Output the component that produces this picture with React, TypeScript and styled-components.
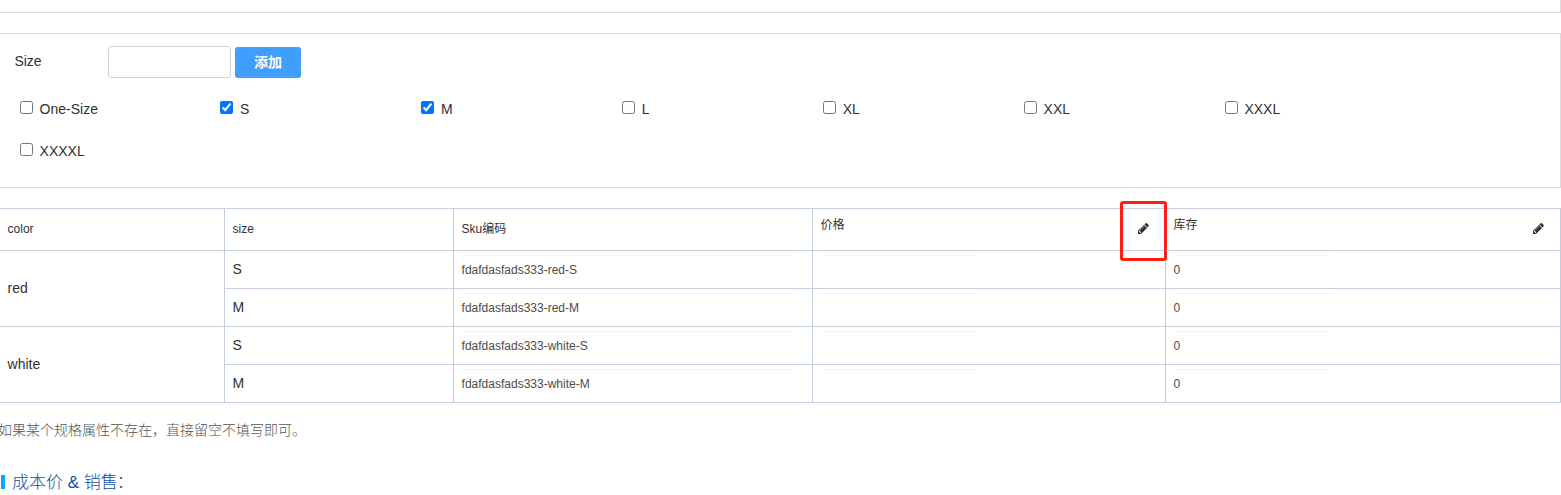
import React from "react";
import styled, { createGlobalStyle } from "styled-components";

const GlobalStyle = createGlobalStyle`
  * { box-sizing: border-box; }
  body {
    margin: 0;
    background: #fff;
    color: #303133;
    font: 14px/20px "Liberation Sans", "Noto Sans CJK SC", sans-serif;
    overflow: hidden;
  }
`;

const Page = styled.main`
  width: 1561px;
  height: 495px;
  overflow: hidden;
`;

const PreviousPanel = styled.div`
  height: 13px;
  border: solid #dcdcdc;
  border-width: 0 1px 1px 0;
`;

const SizePanel = styled.section`
  height: 155px;
  margin-top: 20px;
  padding-top: 12px;
  border: solid #dcdcdc;
  border-width: 1px 1px 1px 0;
`;

const AddRow = styled.div`
  display: flex;
  align-items: flex-start;
  height: 32px;
  padding-left: 14.4px;
`;

const AddLabel = styled.label`
  width: 93.6px;
  padding-top: 5px;
`;

const SizeInput = styled.input`
  width: 123px;
  height: 32px;
  margin: 0 4px 0 0;
  padding: 0 8px;
  border: 1px solid #ced4da;
  border-radius: 3px;
  outline: none;
`;

const AddButton = styled.button`
  width: 66px;
  height: 31px;
  margin-top: 1px;
  padding: 0;
  border: 0;
  border-radius: 3px;
  background: #409eff;
  color: #fff;
  font: bold 14px/31px "Liberation Sans", "Noto Sans CJK SC", sans-serif;
`;

const Options = styled.div`
  display: grid;
  grid-template-columns: 200.4px repeat(6, 200.9px);
  grid-auto-rows: 42px;
  padding: 10px 0 0 20px;
`;

const Option = styled.label`
  display: flex;
  align-items: flex-start;
  padding-top: 11px;

  input {
    width: 13px;
    height: 13px;
    margin: 2px 6.6px 0 0;
  }
`;

const SkuTable = styled.div`
  display: grid;
  grid-template-columns: 225px 229px 359px 353px 395px;
  grid-template-rows: 42px repeat(4, 38px);
  margin-top: 20px;
  border-top: 1px solid #c4cedc;
`;

const Cell = styled.div<{ $span?: number }>`
  display: flex;
  align-items: center;
  grid-row: span ${(p) => p.$span ?? 1};
  padding: 0 8px 2px 7.6px;
  border: solid #c4cedc;
  border-width: 0 1px 1px 0;
`;

const HeadCell = styled(Cell)`
  font-size: 12px;
`;

const EditableHead = styled(HeadCell)`
  position: relative;
  justify-content: space-between;
  padding-right: 16px;
`;

const HeadText = styled.span`
  padding-bottom: 8px;
`;

const FieldCell = styled(Cell)`
  flex-direction: column;
  align-items: flex-start;
  justify-content: flex-start;
  padding-top: 4px;
  font-size: 12px;
  color: #4c4c4c;
`;

const FieldEdge = styled.span<{ $width: number }>`
  width: ${(p) => p.$width}px;
  height: 1px;
  margin: 0 0 4px 2.4px;
  background: #f3f4f6;
`;

const Highlight = styled.span`
  position: absolute;
  top: -8px;
  right: -2px;
  width: 47px;
  height: 60px;
  border: 3px solid #ff1f12;
  border-radius: 3px;
`;

const Hint = styled.p`
  margin: 17px 0 0 -2px;
  color: #555;
  font-weight: 300;
`;

const SectionTitle = styled.h2`
  display: flex;
  align-items: center;
  height: 24px;
  margin: 30px 0 0;
  color: #0d4f9e;
  font-size: 17px;
  font-weight: 300;

  &::before {
    content: "";
    width: 4px;
    height: 14px;
    margin: 0 7px 0 1px;
    background: #00aaff;
  }
`;

const TitleText = styled.span`
  padding-top: 2px;
`;

const TitleColon = styled.span`
  margin-left: -1px;
`;

const PencilIcon = () => (
  <svg width="11" height="12.8" viewBox="0 0 1536 1792" fill="#2b2d30" aria-hidden="true">
    <path d="M363 1536l91-91-235-235-91 91v107h128v128h107zM886 608q0-22-22-22-10 0-17 7l-542 542q-7 7-7 17 0 22 22 22 10 0 17-7l542-542q7-7 7-17zM832 416l416 416-832 832h-416v-416zM1515 512q0 53-37 90l-166 166-416-416 166-165q36-38 90-38 53 0 91 38l235 234q37 39 37 91z" />
  </svg>
);

const sizes = ["One-Size", "S", "M", "L", "XL", "XXL", "XXXL", "XXXXL"];
const selected = ["S", "M"];
const colors = ["red", "white"];

export default function App() {
  return (
    <Page>
      <GlobalStyle />
      <PreviousPanel />
      <SizePanel>
        <AddRow>
          <AddLabel htmlFor="size">Size</AddLabel>
          <SizeInput id="size" />
          <AddButton>添加</AddButton>
        </AddRow>
        <Options>
          {sizes.map((size) => (
            <Option key={size}>
              <input type="checkbox" defaultChecked={selected.includes(size)} />
              {size}
            </Option>
          ))}
        </Options>
      </SizePanel>
      <SkuTable>
        <HeadCell>color</HeadCell>
        <HeadCell>size</HeadCell>
        <HeadCell>Sku编码</HeadCell>
        <EditableHead>
          <HeadText>价格</HeadText>
          <PencilIcon />
          <Highlight />
        </EditableHead>
        <EditableHead>
          <HeadText>库存</HeadText>
          <PencilIcon />
        </EditableHead>
        {colors.map((color) => (
          <React.Fragment key={color}>
            <Cell $span={2}>{color}</Cell>
            {selected.map((size) => (
              <React.Fragment key={size}>
                <Cell>{size}</Cell>
                <FieldCell>
                  <FieldEdge $width={328} />
                  {`fdafdasfads333-${color}-${size}`}
                </FieldCell>
                <FieldCell>
                  <FieldEdge $width={153} />
                </FieldCell>
                <FieldCell>
                  <FieldEdge $width={153} />0
                </FieldCell>
              </React.Fragment>
            ))}
          </React.Fragment>
        ))}
      </SkuTable>
      <Hint>如果某个规格属性不存在，直接留空不填写即可。</Hint>
      <SectionTitle>
        <TitleText>
          成本价 &amp; 销售<TitleColon>：</TitleColon>
        </TitleText>
      </SectionTitle>
    </Page>
  );
}
